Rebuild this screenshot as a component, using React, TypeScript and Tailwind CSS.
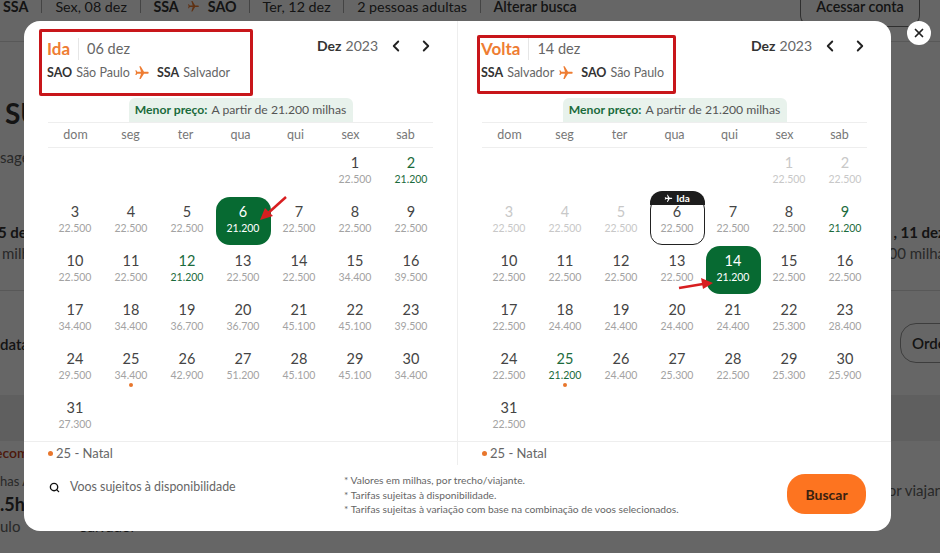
import React from "react";
import { ChevronLeft, ChevronRight, Search, X } from "lucide-react";

type Day = { d: number; p: string; tone?: "low" | "off" | "sel" | "ida"; dot?: boolean };

const Plane: React.FC<{ className?: string }> = ({ className }) => (
  <svg viewBox="0 0 24 24" className={className} fill="currentColor">
    <path transform="rotate(90 12 12)" d="M21 16v-2l-8-5V3.5c0-.83-.67-1.5-1.5-1.5S10 2.67 10 3.5V9l-8 5v2l8-2.5V19l-2 1.5V22l3.5-1 3.5 1v-1.5L13 19v-5.5l8 2.5z" />
  </svg>
);

const mk = (rows: (string | [string, Day["tone"]?, boolean?])[]): Day[] =>
  rows.map((r, i) =>
    typeof r === "string" ? { d: i + 1, p: r } : { d: i + 1, p: r[0], tone: r[1], dot: r[2] }
  );

const ida: Day[] = mk([
  "22.500", ["21.200", "low"],
  "22.500", "22.500", "22.500", ["21.200", "sel"], "22.500", "22.500", "22.500",
  "22.500", "22.500", ["21.200", "low"], "22.500", "22.500", "34.400", "39.500",
  "34.400", "34.400", "36.700", "36.700", "45.100", "45.100", "39.500",
  "29.500", ["34.400", undefined, true], "42.900", "51.200", "45.100", "45.100", "34.400",
  "27.300",
]);

const volta: Day[] = mk([
  ["22.500", "off"], ["22.500", "off"],
  ["22.500", "off"], ["22.500", "off"], ["22.500", "off"], ["22.500", "ida"], "22.500", "22.500", ["21.200", "low"],
  "22.500", "22.500", "22.500", "22.500", ["21.200", "sel"], "22.500", "22.500",
  "22.500", "24.400", "24.400", "24.400", "24.400", "25.300", "28.400",
  "22.500", ["21.200", "low", true], "24.400", "25.300", "22.500", "25.300", "25.900",
  "22.500",
]);

const weekDays = ["dom", "seg", "ter", "qua", "qui", "sex", "sab"];

const Cell: React.FC<{ day: Day }> = ({ day }) => {
  const { d, p, tone, dot } = day;
  let box = "text-[#444]";
  let price = "text-[#a3a3a3]";
  if (tone === "low") {
    box = "text-[#1b6b3c]";
    price = "text-[#1b6b3c]";
  }
  if (tone === "off") {
    box = "text-[#c8c8c8]";
    price = "text-[#c8c8c8]";
  }
  if (tone === "sel") {
    box = "bg-[#076a32] text-white rounded-[14px]";
    price = "text-white";
  }
  if (tone === "ida") {
    box = "border border-[#222] rounded-[12px] text-[#444]";
  }
  return (
    <div className="flex h-[49px] justify-center">
      <div className={`relative flex h-[48px] w-[55px] flex-col items-center ${box}`}>
        {tone === "ida" && (
          <div className="absolute -left-px -right-px -top-[7px] flex h-[14px] items-center justify-center gap-[3px] rounded-t-[12px] bg-[#1d1d1d] text-[10px] font-bold text-white">
            <Plane className="h-[9px] w-[9px]" />
            Ida
          </div>
        )}
        <span className={`${tone === "ida" ? "mt-[5px]" : "mt-[6px]"} text-[14.5px] leading-[18px]`}>{d}</span>
        <span className={`mt-[1px] text-[10.5px] leading-[13px] ${price}`}>{p}</span>
        {dot && <span className="mt-[1px] h-[4px] w-[4px] rounded-full bg-[#e8762c]" />}
      </div>
    </div>
  );
};

const Panel: React.FC<{
  title: string;
  date: string;
  from: [string, string];
  to: [string, string];
  days: Day[];
  mark: string;
  divider?: boolean;
  arrow: React.ReactNode;
}> = ({ title, date, from, to, days, mark, divider, arrow }) => (
  <div className={`relative flex h-[444px] flex-col ${divider ? "border-r border-[#eee]" : ""}`}>
    <div className="flex h-[77px] items-start justify-between pl-[23px] pr-[22px] pt-[17px]">
      <div>
        <div className="flex h-[22px] items-center">
          <span className="pr-[8px] text-[17px] font-bold text-[#ee7d33]">{title}</span>
          <span className="border-l border-[#e6e6e6] pl-[8px] text-[14.5px] leading-[22px] text-[#666]">{date}</span>
        </div>
        <div className="mt-[4px] flex items-center text-[12.5px] text-[#666]">
          <b className="font-bold text-[#333]">{from[0]}</b>
          <span className="ml-[4px]">{from[1]}</span>
          <Plane className="mx-[4px] h-[16px] w-[16px] text-[#ee7d33]" />
          <b className="ml-[3px] font-bold text-[#333]">{to[0]}</b>
          <span className="ml-[4px]">{to[1]}</span>
        </div>
      </div>
      <div className="-mt-[3px] flex items-center text-[14px] text-[#666]">
        <b className="font-bold text-[#333]">Dez</b>
        <span className="ml-[4px]">2023</span>
        <ChevronLeft className="ml-[9px] h-[18px] w-[18px] text-[#222]" strokeWidth={2.5} />
        <ChevronRight className="ml-[12px] h-[18px] w-[18px] text-[#222]" strokeWidth={2.5} />
      </div>
    </div>
    <div className="flex justify-center pt-px">
      <div className="flex h-[24px] w-[224px] items-center justify-center rounded-t-[6px] bg-[#e8f2ec] text-[12.2px] text-[#555]">
        <b className="mr-[4px] font-bold text-[#1b6b3c]">Menor preço:</b>A partir de 21.200 milhas
      </div>
    </div>
    <div className="mx-6 grid h-[26px] grid-cols-7 items-center border-y border-[#eee] text-center text-[12.5px] text-[#777]">
      {weekDays.map((w) => (
        <span key={w}>{w}</span>
      ))}
    </div>
    <div className="ml-[23px] grid h-[293px] w-[392px] grid-cols-7">
      {Array.from({ length: 5 }).map((_, i) => (
        <div key={i} />
      ))}
      {days.map((day) => (
        <Cell key={day.d} day={day} />
      ))}
    </div>
    <div className="flex h-[24px] items-center gap-[3px] border-t border-[#eee] pl-[24px] text-[13px] text-[#666]">
      <span className="h-[5px] w-[5px] rounded-full bg-[#e8762c]" />
      25 - Natal
    </div>
    <div className={`absolute ${mark} rounded-[2px] border-[3px] border-[#c8161a]`} />
    {arrow}
  </div>
);

const App: React.FC = () => {
  return (
    <div className="relative h-[553px] w-[940px] overflow-hidden bg-white font-['Lato',sans-serif] text-[#333]">
      {/* Page behind the dialog */}
      <div className="flex h-[42px] items-start border-b border-[#ddd] text-[14.3px] leading-[13px]">
        <div className="flex items-center">
          <b className="pl-[3px] pr-[13px]">SSA</b>
          <span className="border-l border-[#aaa] px-[13px]">Sex, 08 dez</span>
          <span className="flex items-center gap-[8px] border-l border-[#aaa] px-[12.5px] font-bold">
            SSA
            <Plane className="h-[13px] w-[13px] text-[#ee7d33]" />
            SAO
          </span>
          <span className="border-l border-[#aaa] px-[12.5px]">Ter, 12 dez</span>
          <span className="border-l border-[#aaa] px-[13px]">2 pessoas adultas</span>
          <span className="border-l border-[#aaa] px-[12.5px] font-semibold">Alterar busca</span>
        </div>
        <div className="ml-auto mr-[20px] flex h-[27px] w-[120px] items-start justify-center rounded-b-[12px] border-x border-b border-[#777] font-semibold">
          Acessar conta
        </div>
      </div>
      <div className="h-[104px] pl-[5px] pt-[54px] text-[28px] font-bold leading-[34px]">SU</div>
      <div className="h-[60px] text-[15px] text-[#666]">sagem</div>
      <div className="flex h-[85px] justify-between border-b border-[#ddd] pt-[16px] text-[15px] leading-[21px]">
        <div className="-ml-[2px]">
          <b>5 de</b>
          <div className="pl-[4px] text-[#666]">milh</div>
        </div>
        <div className="-mr-[5px] text-right">
          <b>, 11 dez</b>
          <div className="text-[#666]">00 milha</div>
        </div>
      </div>
      <div className="flex h-[104px] items-start justify-between pt-[32px] font-semibold">
        <span className="pt-[10px] text-[15px]">data</span>
        <span className="-mr-[30px] flex h-[40px] w-[70px] items-center rounded-[16px] border border-[#999] pl-[11px] text-[15px]">Ordem</span>
      </div>
      <div className="h-[46px] bg-[#eee]" />
      <div className="-ml-[5px] pt-[2px] text-[14px] font-semibold leading-[20px] text-[#c0401a]">ecom</div>
      <div className="flex h-[21px] justify-between pt-[9px] text-[13px] text-[#666]">
        <span>has A</span>
        <span className="-mr-[3px] pt-[7px] text-[15px]">por viajan</span>
      </div>
      <div className="pt-[9px] text-[18px] font-bold leading-[22px]">.5h</div>
      <div className="flex gap-[59px] text-[15px] text-[#666]">
        <span>ulo</span>
        <span className="text-[#333]">Salvador</span>
      </div>

      {/* Dim layer */}
      <div className="absolute inset-0 bg-black/60" />

      {/* Dialog */}
      <div className="absolute left-6 top-[21px] w-[867px] rounded-[16px] bg-white text-[#444]">
        <div className="grid grid-cols-[434px_433px]">
          <Panel
            title="Ida"
            date="06 dez"
            from={["SAO", "São Paulo"]}
            to={["SSA", "Salvador"]}
            days={ida}
            mark="left-[15px] top-[8px] h-[67px] w-[214px]"
            divider
            arrow={
              <svg className="absolute left-[230px] top-[172px] h-[30px] w-[40px]" viewBox="0 0 40 30">
                <path d="M32 4 L12 22" stroke="#d81e20" strokeWidth="2.5" />
                <path d="M6 27 L11 15 L19 23 Z" fill="#d81e20" />
              </svg>
            }
          />
          <Panel
            title="Volta"
            date="14 dez"
            from={["SSA", "Salvador"]}
            to={["SAO", "São Paulo"]}
            days={volta}
            mark="left-[19px] top-[14px] h-[59px] w-[199px]"
            arrow={
              <svg className="absolute left-[215px] top-[254px] h-[20px] w-[44px]" viewBox="0 0 44 20">
                <path d="M6 13 L30 9" stroke="#d81e20" strokeWidth="2.5" />
                <path d="M40 8 L28 3 L30 14 Z" fill="#d81e20" />
              </svg>
            }
          />
        </div>
        <div className="flex h-[66px] items-start pl-[25px] pr-[25px]">
          <div className="flex w-[295px] items-center pt-[13px]">
            <Search className="h-[11px] w-[11px] text-[#111]" strokeWidth={3} />
            <span className="ml-[10px] text-[12.4px] text-[#666]">Voos sujeitos à disponibilidade</span>
          </div>
          <div className="pt-[8px] text-[10.25px] leading-[14.5px] text-[#666]">
            <div>* Valores em milhas, por trecho/viajante.</div>
            <div>* Tarifas sujeitas à disponibilidade.</div>
            <div>* Tarifas sujeitas à variação com base na combinação de voos selecionados.</div>
          </div>
          <div className="ml-auto mt-[9px] flex h-[40px] w-[79px] items-center justify-center rounded-[18px] bg-[#fd7420] text-[14px] font-bold text-[#3a2110]">
            Buscar
          </div>
        </div>
      </div>

      {/* Close button */}
      <div className="absolute left-[907px] top-[21px] flex h-[24px] w-[24px] items-center justify-center rounded-full bg-white text-[#222]">
        <X className="h-[14px] w-[14px]" strokeWidth={3} />
      </div>
    </div>
  );
};

export default App;
